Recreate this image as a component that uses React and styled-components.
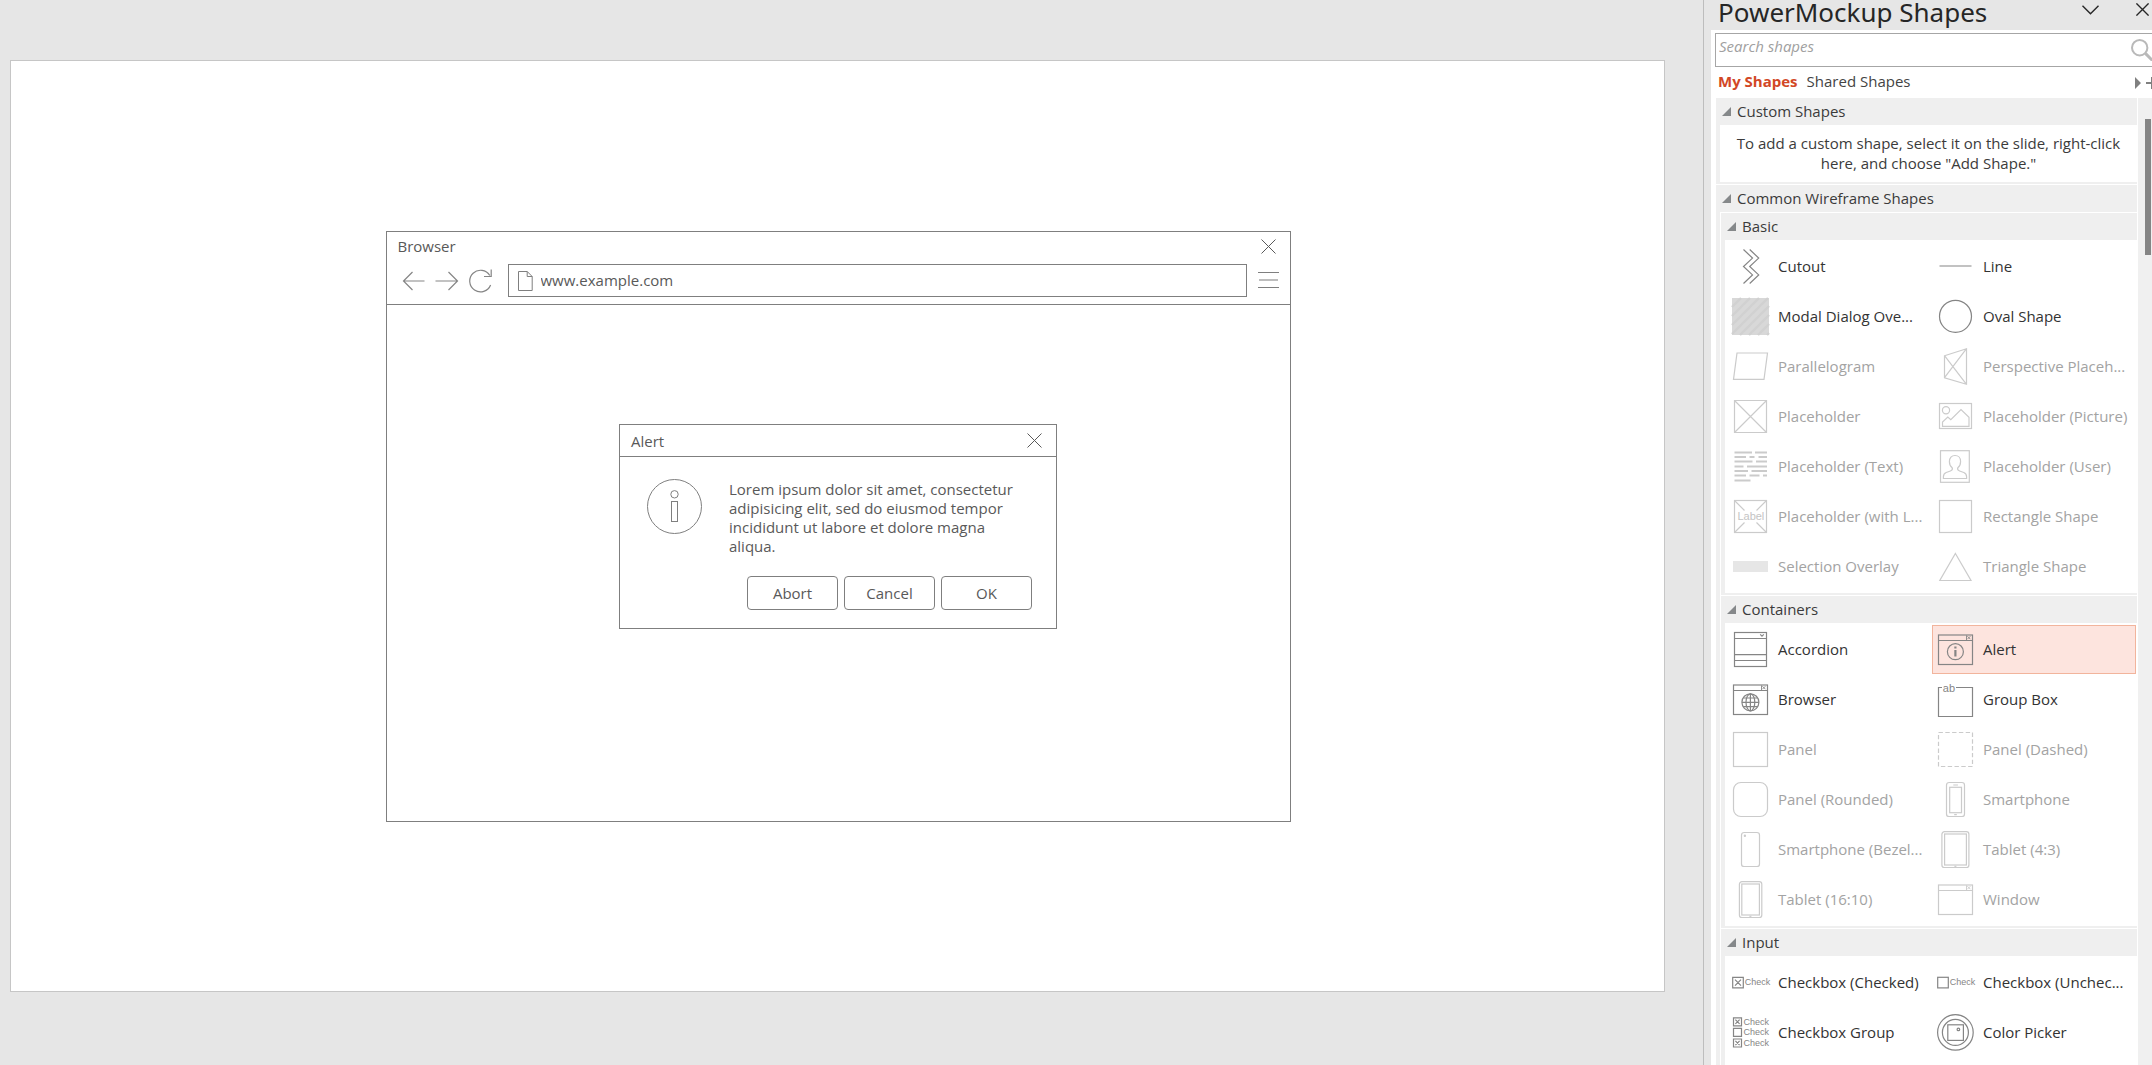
import React from "react";
import styled, { createGlobalStyle } from "styled-components";

const GlobalStyle = createGlobalStyle`
  * {
    box-sizing: border-box;
  }
  body {
    margin: 0;
    overflow: hidden;
    background-color: #e6e6e6;
    font-family: "Open Sans", "Noto Sans", sans-serif;
    font-size: 15px;
    color: #3b3b3b;
  }
  button, input {
    font: inherit;
    color: inherit;
    border: none;
    background: none;
    padding: 0;
    border-radius: 0;
  }
  p, h1, h2, h3 {
    margin: 0;
    font-size: inherit;
    font-weight: normal;
  }
  svg {
    display: block;
    flex-shrink: 0;
  }
`;

const TextLines = () => (
  <path
    strokeWidth="2"
    d="M2.5 4.5H20M23 4.5h12M2.5 9H14M17.5 9h5M26.5 9H35M2.5 13.5h18M24 13.5h11M2.5 18.5h9M15 18.5h20M2.5 23H16M19.5 23H35M2.5 27.5H14M17.5 27.5h10M31 27.5h4M2.5 32.5h16"
  />
);

const MiniWindow = ({ children }) => (
  <>
    <rect x="1.5" y="4" width="34" height="29.5" />
    <path d="M1.5 9.5h34" />
    <path strokeWidth="0.9" d="M30.4 5.2l3 3M33.4 5.2l-3 3M29.5 4.4v4.8" />
    {children}
  </>
);

const CheckText = ({ x, y }) => (
  <text x={x} y={y} fontSize="9" stroke="none" fill="#858585">
    Check
  </text>
);

const drawings = {
  cutout: (
    <path d="M11.5 1.5l9 8.6-9 8.4 9 8.4-9 8.6M17.7 1.5l9 8.6-9 8.4 9 8.4-9 8.6" />
  ),
  line: <path d="M2.5 18h32" />,
  overlay: (
    <>
      <rect width="37" height="37" fill="#d8d8d8" stroke="none" />
      <path
        stroke="#d1d1d1"
        strokeWidth="2.4"
        d="M0 9L9 0M0 18L18 0M0 27L27 0M0 36L36 0M8 37L37 8M17 37l20-20M26 37l11-11M35 37l2-2"
      />
    </>
  ),
  oval: <circle cx="18.5" cy="18.3" r="16" />,
  parallelogram: <path d="M5 5h30.5L32 31.3H1.5z" />,
  perspective: <path d="M7.5 7.7l22-7v35.6l-22-6.6zM7.5 7.7l22 28.6M29.5.7l-22 29" />,
  placeholder: <path d="M2.5 2.5h32v32h-32zl32 32M34.5 2.5l-32 32" />,
  picture: (
    <>
      <rect x="2.5" y="5.5" width="32" height="25" />
      <circle cx="9" cy="12.2" r="3.6" />
      <path d="M5.5 28.3V24l5.3-5 3 2.7L24 11.6l8 7.7v9z" />
    </>
  ),
  text: <TextLines />,
  user: (
    <>
      <rect x="3.5" y="2.7" width="28.8" height="31.6" />
      <path d="M15.2 19.8c-1.8-1.4-2.8-3.8-2.8-6.4 0-3.4 2.2-5.9 5.6-5.9s5.6 2.5 5.6 5.9c0 2.6-1 5-2.8 6.4-.6 1.6.2 2.6 1.8 3.2l4.2 1.5c1.8.7 2.8 2 2.8 4.2v1.8H6.4v-1.8c0-2.2 1-3.5 2.8-4.2l4.2-1.5c1.6-.6 2.4-1.6 1.8-3.2z" />
    </>
  ),
  label: (
    <>
      <rect x="2.5" y="2.5" width="32" height="32" />
      <path d="M2.5 2.5l10 10M34.5 2.5l-10 10M2.5 34.5l10-10M34.5 34.5l-10-10" />
      <text x="5.4" y="22.3" fontSize="11" stroke="none" fill="#c4c4c4">
        Label
      </text>
    </>
  ),
  selection: <rect x="1" y="13" width="35" height="11" fill="#e6e6e6" stroke="none" />,
  rectangle: <rect x="2.5" y="2.5" width="32" height="32" />,
  triangle: <path d="M18.4 5.5L34 32.5H2.8z" />,
  accordion: (
    <>
      <rect x="2.5" y="1.5" width="32" height="34" />
      <path d="M2.5 7.5h32M2.5 23.7h32M2.5 29.5h32M28.2 3.4l1.8 1.8 1.8-1.8" />
    </>
  ),
  alert: (
    <MiniWindow>
      <circle cx="18.4" cy="20.7" r="8" />
      <path strokeWidth="2.2" d="M18.4 19v6.4M18.4 15.4v2" />
    </MiniWindow>
  ),
  browser: (
    <MiniWindow>
      <circle cx="18.4" cy="21.3" r="8.5" />
      <ellipse cx="18.4" cy="21.3" rx="4.4" ry="8.5" />
      <path d="M18.4 12.8v17M10 21.3h17M11.4 17h14M11.4 25.6h14" />
    </MiniWindow>
  ),
  groupBox: (
    <>
      <path d="M5 6.5H1.5v29h34v-29H19" />
      <text x="5.8" y="10.6" fontSize="11" stroke="none" fill="#858585">
        ab
      </text>
    </>
  ),
  panel: <rect x="1.5" y="1.5" width="34" height="34" />,
  dashed: <rect x="1.5" y="1.5" width="34" height="34" strokeDasharray="4.4 2.4" />,
  rounded: <rect x="1.5" y="1.5" width="34" height="34" rx="7.5" />,
  smartphone: (
    <>
      <rect x="9.5" y="1.5" width="18" height="34" rx="2.6" />
      <rect x="12.7" y="6.3" width="11.8" height="25.4" />
      <path d="M16.3 4h4.6M17.2 33.7h2.6" />
    </>
  ),
  bezel: (
    <>
      <rect x="9.5" y="1.5" width="18" height="34" rx="2.6" />
      <circle cx="12.9" cy="4.8" r="0.6" />
    </>
  ),
  tablet43: (
    <>
      <rect x="4.9" y="0.7" width="27" height="35.8" rx="2.6" />
      <rect x="7.6" y="3" width="21.8" height="31" />
      <path d="M17.4 35.3h2" />
    </>
  ),
  tablet1610: (
    <>
      <rect x="7.4" y="0.7" width="22.4" height="35.8" rx="2.6" />
      <rect x="9.8" y="3" width="17.6" height="31" />
      <path d="M17.4 35.3h2" />
    </>
  ),
  window: <MiniWindow />,
  checked: (
    <>
      <path d="M.7 13.3h10.6v10.6H.7zM3 15.6l6 6M9 15.6l-6 6" />
      <CheckText x="12.8" y="21.4" />
    </>
  ),
  unchecked: (
    <>
      <rect x="0.7" y="13.3" width="10.6" height="10.6" />
      <CheckText x="12.8" y="21.4" />
    </>
  ),
  checkGroup: (
    <>
      <path d="M1.5 3.8h8v8h-8zM3.4 5.7l4.2 4.2M7.6 5.7L3.4 9.9M1.5 14.4h8v8h-8zM1.5 25h8v8h-8zM3.4 26.9l4.2 4.2M7.6 26.9l-4.2 4.2" />
      <CheckText x="11.4" y="11" />
      <CheckText x="11.4" y="21.4" />
      <CheckText x="11.4" y="32" />
    </>
  ),
  colorPicker: (
    <>
      <circle cx="18.4" cy="18.4" r="17.8" />
      <circle cx="18.4" cy="18.4" r="13" />
      <rect x="10.8" y="10.8" width="15.6" height="15.6" />
      <circle cx="21.4" cy="15.4" r="1.3" />
    </>
  ),
};

const groups = [
  {
    title: "Basic",
    shapes: [
      { name: "Cutout", icon: "cutout" },
      { name: "Line", icon: "line" },
      { name: "Modal Dialog Ove...", icon: "overlay" },
      { name: "Oval Shape", icon: "oval" },
      { name: "Parallelogram", icon: "parallelogram", locked: true },
      { name: "Perspective Placeh...", icon: "perspective", locked: true },
      { name: "Placeholder", icon: "placeholder", locked: true },
      { name: "Placeholder (Picture)", icon: "picture", locked: true },
      { name: "Placeholder (Text)", icon: "text", locked: true },
      { name: "Placeholder (User)", icon: "user", locked: true },
      { name: "Placeholder (with L...", icon: "label", locked: true },
      { name: "Rectangle Shape", icon: "rectangle", locked: true },
      { name: "Selection Overlay", icon: "selection", locked: true },
      { name: "Triangle Shape", icon: "triangle", locked: true },
    ],
  },
  {
    title: "Containers",
    shapes: [
      { name: "Accordion", icon: "accordion" },
      { name: "Alert", icon: "alert", selected: true },
      { name: "Browser", icon: "browser" },
      { name: "Group Box", icon: "groupBox" },
      { name: "Panel", icon: "panel", locked: true },
      { name: "Panel (Dashed)", icon: "dashed", locked: true },
      { name: "Panel (Rounded)", icon: "rounded", locked: true },
      { name: "Smartphone", icon: "smartphone", locked: true },
      { name: "Smartphone (Bezel...", icon: "bezel", locked: true },
      { name: "Tablet (4:3)", icon: "tablet43", locked: true },
      { name: "Tablet (16:10)", icon: "tablet1610", locked: true },
      { name: "Window", icon: "window", locked: true },
    ],
  },
  {
    title: "Input",
    shapes: [
      { name: "Checkbox (Checked)", icon: "checked" },
      { name: "Checkbox (Unchec...", icon: "unchecked" },
      { name: "Checkbox Group", icon: "checkGroup" },
      { name: "Color Picker", icon: "colorPicker" },
    ],
  },
];

const Cross = ({ size = 15, weight = 1 }) => (
  <svg width={size} height={size} viewBox="0 0 15 15" stroke="currentColor" strokeWidth={weight}>
    <path d="M.5.5l14 14M14.5.5l-14 14" />
  </svg>
);

const SectionHeader = ({ title }) => (
  <HeaderButton type="button" aria-expanded="true">
    <svg width="9" height="9" viewBox="0 0 9 9">
      <path d="M9 0v9H0z" fill="#85888a" />
    </svg>
    <Caption>{title}</Caption>
  </HeaderButton>
);

const ShapeItem = ({ shape }) => (
  <Item type="button" $selected={shape.selected} $locked={shape.locked}>
    <ShapeIcon viewBox="0 0 37 37" $locked={shape.locked}>
      {drawings[shape.icon]}
    </ShapeIcon>
    <Caption>{shape.name}</Caption>
  </Item>
);

const BrowserMock = () => (
  <BrowserFrame>
    <BrowserTop>
      <BrowserTitle>
        <h2>Browser</h2>
        <Cross />
      </BrowserTitle>
      <BrowserBar>
        <svg width="90" height="24" viewBox="0 0 90 24" fill="none" stroke="#858585" strokeWidth="1.2">
          <path d="M22.5 12H1.5M10.5 3l-9 9 9 9M33.5 12h22M46.5 3l9 9-9 9" />
          <path d="M88.6 16a10.8 10.8 0 1 1-.8-9.5M89.2.5v7H82" />
        </svg>
        <AddressField>
          <svg width="15" height="20" viewBox="0 0 15 20" fill="none" stroke="#7f7f7f">
            <path d="M.5.5h8.7l5 5v14H.5zM9.2.5v5h5" />
          </svg>
          <input aria-label="Address" defaultValue="www.example.com" />
        </AddressField>
        <svg width="21" height="17" viewBox="0 0 21 17" stroke="#7f7f7f">
          <path d="M0 .5h21M0 15.5h21" />
          <path stroke="#bdbdbd" strokeWidth="2" d="M1 8h19" />
        </svg>
      </BrowserBar>
    </BrowserTop>
  </BrowserFrame>
);

const AlertMock = () => (
  <AlertFrame>
    <AlertTitle>
      <h2>Alert</h2>
      <Cross />
    </AlertTitle>
    <AlertBody>
      <svg width="55" height="55" viewBox="0 0 55 55" fill="none" stroke="#7f7f7f">
        <circle cx="27.5" cy="27.5" r="27" />
        <circle cx="27.5" cy="15.3" r="3.7" />
        <rect x="24.5" y="22.5" width="6" height="20" />
      </svg>
      <p>
        Lorem ipsum dolor sit amet, consectetur adipisicing elit, sed do eiusmod
        tempor incididunt ut labore et dolore magna aliqua.
      </p>
    </AlertBody>
    <AlertActions>
      <AlertButton type="button">Abort</AlertButton>
      <AlertButton type="button">Cancel</AlertButton>
      <AlertButton type="button">OK</AlertButton>
    </AlertActions>
  </AlertFrame>
);

const App = () => {
  return (
    <Page>
      <GlobalStyle />
      <Workspace>
        <Slide>
          <BrowserMock />
          <AlertMock />
        </Slide>
      </Workspace>
      <Pane>
        <PaneTitle>
          <h1>PowerMockup Shapes</h1>
          <PaneButton type="button" aria-label="Options">
            <svg width="17" height="10" viewBox="0 0 17 10" fill="none" stroke="currentColor" strokeWidth="1.4">
              <path d="M.5.7l8 8 8-8" />
            </svg>
          </PaneButton>
          <PaneButton type="button" aria-label="Close">
            <Cross size={13} weight={1.6} />
          </PaneButton>
        </PaneTitle>
        <PaneBody>
          <SearchBox>
            <input type="text" aria-label="Search shapes" placeholder="Search shapes" />
            <svg width="21" height="22" viewBox="0 0 21 22" fill="none" stroke="#b9b9b9">
              <circle cx="8.7" cy="8.7" r="7.7" strokeWidth="2" />
              <path strokeWidth="3" d="M14.4 14.4l7 7" />
            </svg>
          </SearchBox>
          <Tabs>
            <Tab type="button" $active>
              My Shapes
            </Tab>
            <Tab type="button">Shared Shapes</Tab>
            <svg width="17" height="12" viewBox="0 0 17 12" fill="#808080">
              <path d="M0 0l6 6-6 6zM11 5h6v2h-6zM16 0h1v12h-1z" />
            </svg>
          </Tabs>
          <TreeArea>
            <Tree>
              <Section>
                <SectionHeader title="Custom Shapes" />
                <Hint>
                  To add a custom shape, select it on the slide, right-click
                  <br />
                  here, and choose "Add Shape."
                </Hint>
              </Section>
              <Section>
                <SectionHeader title="Common Wireframe Shapes" />
                <SubSections>
                  {groups.map((group) => (
                    <Section key={group.title}>
                      <SectionHeader title={group.title} />
                      <ShapeGrid>
                        {group.shapes.map((shape) => (
                          <ShapeItem key={shape.name} shape={shape} />
                        ))}
                      </ShapeGrid>
                    </Section>
                  ))}
                </SubSections>
              </Section>
            </Tree>
            <Scrollbar>
              <ScrollThumb />
            </Scrollbar>
          </TreeArea>
        </PaneBody>
      </Pane>
    </Page>
  );
};

const Page = styled.div`
  display: flex;
  height: 100vh;
  overflow: hidden;
`;

const Workspace = styled.main`
  flex: 1;
  display: flex;
  padding: 60px 38px 73px 10px;
  color: #595959;
`;

const Slide = styled.div`
  flex: 1;
  display: grid;
  place-items: center;
  padding: 1px 0 0 1px;
  background-color: #fff;
  border: 1px solid #c6c6c6;
  > * {
    grid-area: 1 / 1;
  }
`;

const BrowserFrame = styled.section`
  width: 905px;
  height: 591px;
  border: 1px solid #7f7f7f;
`;

const BrowserTop = styled.div`
  display: grid;
  gap: 6px;
  padding: 2px 11px 7px;
  border-bottom: 1px solid #7f7f7f;
`;

const BrowserTitle = styled.div`
  display: flex;
  justify-content: space-between;
  align-items: center;
  height: 24px;
  padding-right: 3px;
`;

const BrowserBar = styled.div`
  display: flex;
  align-items: center;
  gap: 11px;
  padding-left: 4px;
  > svg:first-child {
    margin-right: 5px;
  }
`;

const AddressField = styled.label`
  flex: 1;
  display: flex;
  align-items: center;
  gap: 8px;
  height: 33px;
  padding: 0 9px;
  border: 1px solid #7f7f7f;
  input {
    flex: 1;
    outline: none;
    padding-bottom: 2px;
  }
`;

const AlertFrame = styled.section`
  width: 438px;
  background-color: #fff;
  border: 1px solid #7f7f7f;
`;

const AlertTitle = styled.div`
  display: flex;
  justify-content: space-between;
  align-items: center;
  height: 32px;
  padding: 0 14px 0 11px;
  border-bottom: 1px solid #7f7f7f;
`;

const AlertBody = styled.div`
  display: flex;
  gap: 27px;
  padding: 22px 40px 0 27px;
  p {
    padding-top: 1px;
    line-height: 19px;
  }
`;

const AlertActions = styled.div`
  display: flex;
  justify-content: flex-end;
  gap: 6px;
  padding: 20px 24px 18px;
`;

const AlertButton = styled.button`
  width: 91px;
  height: 34px;
  border: 1px solid #7f7f7f;
  border-radius: 4px;
`;

const Pane = styled.aside`
  width: 449px;
  display: flex;
  flex-direction: column;
  padding-left: 7px;
  border-left: 1px solid #bdbdbd;
`;

const PaneTitle = styled.header`
  display: flex;
  align-items: flex-start;
  gap: 37px;
  height: 30px;
  padding: 2px 3px 0 7px;
  color: #262626;
  h1 {
    flex: 1;
    font-family: "Noto Sans", sans-serif;
    font-size: 26px;
    line-height: 20px;
  }
`;

const PaneButton = styled.button`
  display: flex;
  align-items: center;
  height: 15px;
`;

const PaneBody = styled.div`
  flex: 1;
  min-height: 0;
  display: flex;
  flex-direction: column;
  padding: 3px 0 0 4px;
  background-color: #fff;
`;

const SearchBox = styled.div`
  display: flex;
  align-items: center;
  height: 34px;
  flex-shrink: 0;
  padding-left: 3px;
  border: 1px solid #a6a6a6;
  border-right: none;
  input {
    flex: 1;
    outline: none;
    padding-bottom: 8px;
  }
  input::placeholder {
    font-style: italic;
    color: #a0a0a0;
  }
`;

const Tabs = styled.div`
  display: flex;
  align-items: center;
  gap: 9px;
  height: 31px;
  flex-shrink: 0;
  padding-left: 3px;
  svg {
    margin-left: auto;
  }
`;

const Tab = styled.button`
  padding-bottom: 3px;
  font-weight: ${({ $active }) => ($active ? 700 : 400)};
  color: ${({ $active }) => ($active ? "#d24726" : "#444")};
`;

const TreeArea = styled.div`
  flex: 1;
  min-height: 0;
  display: flex;
  gap: 1px;
  padding-left: 1px;
  overflow: hidden;
`;

const Tree = styled.div`
  flex: 1;
`;

const Section = styled.section`
  padding: 0 0 2px 4px;
  background-color: #efefef;
  & + & {
    border-top: 1px solid #fff;
  }
`;

const HeaderButton = styled.button`
  display: flex;
  align-items: center;
  gap: 6px;
  height: 27px;
  padding-left: 2px;
`;

const Caption = styled.span`
  padding-bottom: 2px;
`;

const Hint = styled.p`
  padding: 8px 0 9px;
  background-color: #fff;
  line-height: 20px;
  text-align: center;
`;

const ShapeGrid = styled.div`
  display: grid;
  grid-template-columns: 1fr 1fr;
  grid-auto-rows: 49px;
  gap: 1px;
  padding: 2px 1px 2px 2px;
  background-color: #fff;
`;

const SubSections = styled.div`
  border-top: 1px solid #fff;
  border-left: 1px solid #fff;
  ${Section}:last-child ${ShapeGrid} {
    padding-bottom: 24px;
  }
`;

const Item = styled.button`
  display: flex;
  align-items: center;
  gap: 9px;
  padding-left: 4px;
  border: 1px solid ${({ $selected }) => ($selected ? "#f2b49c" : "transparent")};
  background-color: ${({ $selected }) => ($selected ? "#fde4de" : "#fff")};
  color: ${({ $locked }) => ($locked ? "#a3a3a3" : "#333")};
  white-space: nowrap;
`;

const ShapeIcon = styled.svg`
  width: 37px;
  height: 37px;
  overflow: visible;
  fill: none;
  stroke: ${({ $locked }) => ($locked ? "#cbcbcb" : "#858585")};
  stroke-width: 1.2;
  font-family: "Liberation Sans", Arial, sans-serif;
`;

const Scrollbar = styled.div`
  width: 14px;
  padding: 21px 1px 0 7px;
  background-color: #f0f0f0;
`;

const ScrollThumb = styled.div`
  height: 136px;
  background-color: #858585;
`;

export default App;
